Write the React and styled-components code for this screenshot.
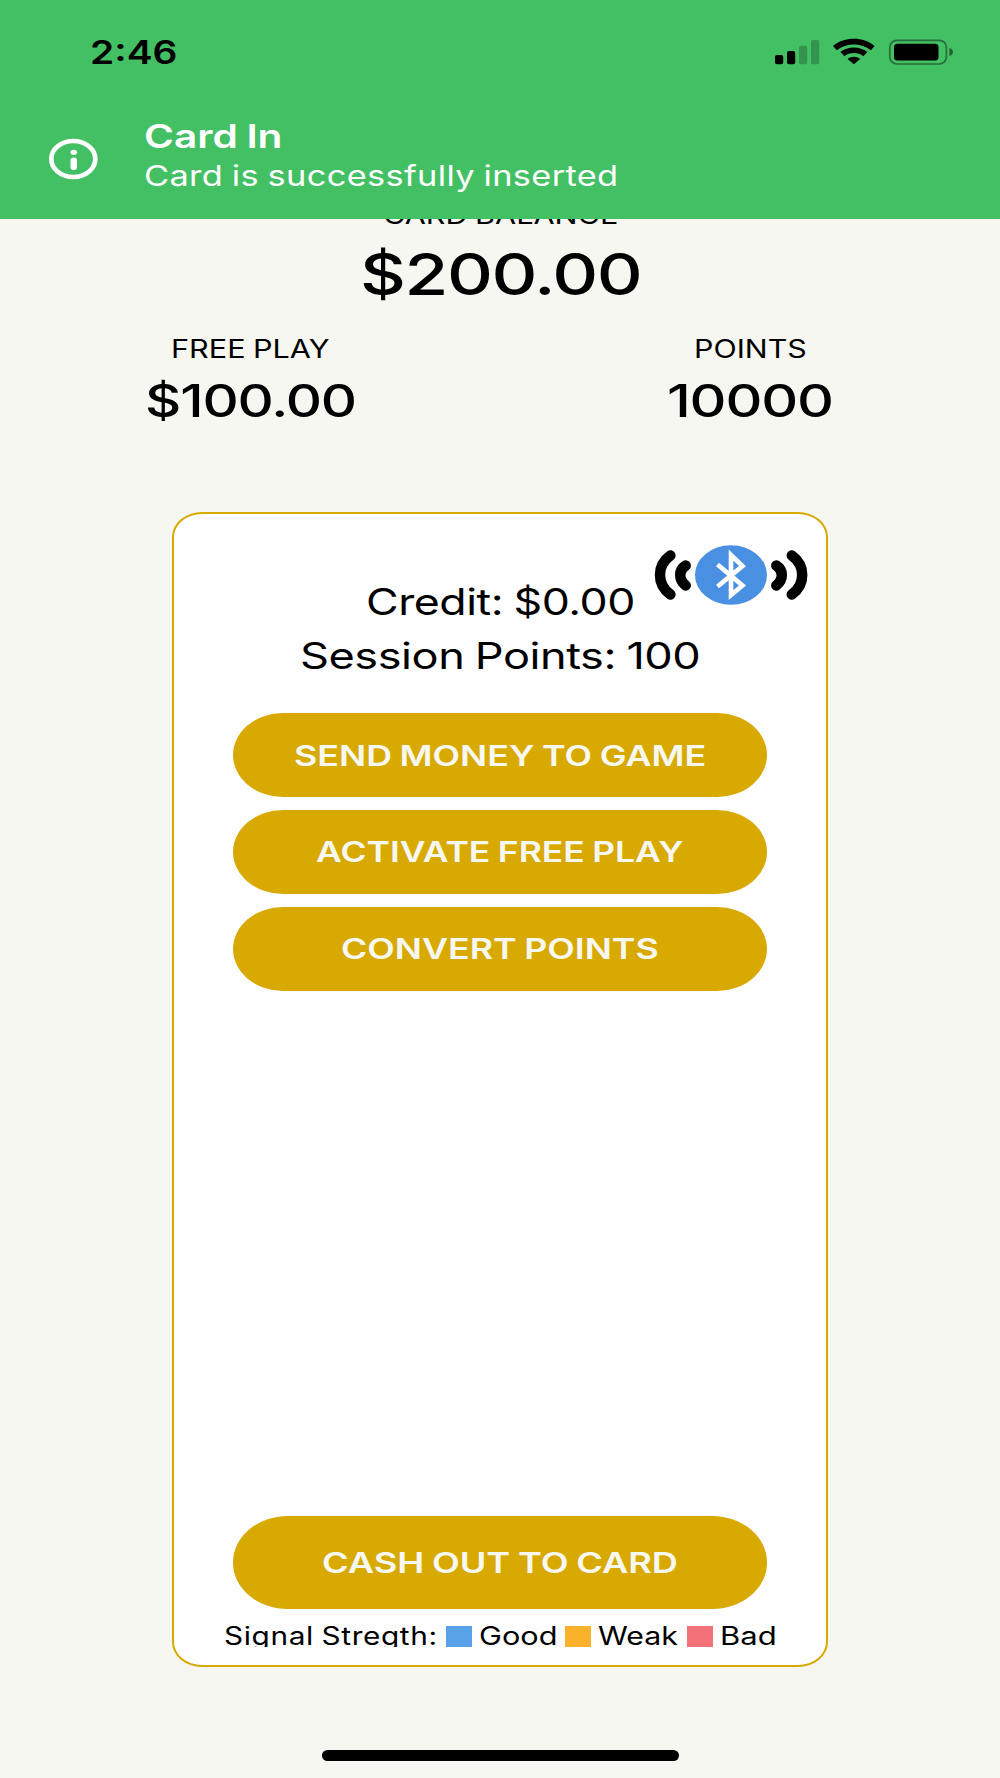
import React, { useLayoutEffect, useRef, useState } from "react";
import styled, { createGlobalStyle } from "styled-components";

const GlobalStyle = createGlobalStyle`
  *, *::before, *::after { box-sizing: border-box; }
  body { margin: 0; background: #f6f7f1; }
`;

const Screen = styled.div`
  display: flex;
  flex-direction: column;
  align-items: center;
  width: 1000px;
  height: 1778px;
  overflow: hidden;
  background: #f6f7f1;
  color: #000;
  font-family: Inter, "Liberation Sans", sans-serif;
`;

/* Wide lettering: the glyphs are stretched to span the given width */
const TextBox = styled.div`
  width: ${(p) => p.$width}px;
  height: ${(p) => p.$line}px;
  line-height: ${(p) => p.$line}px;
  font-size: ${(p) => p.$size}px;
  font-weight: ${(p) => p.$weight};
  letter-spacing: ${(p) => p.$tracking}em;
  word-spacing: -0.04em;
  white-space: nowrap;
  text-align: left;
  flex: none;
`;

const Glyphs = styled.span`
  display: inline-block;
  transform-origin: 0 50%;
`;

function WideText({ width, line, size, weight = 400, tracking = 0, children }) {
  const ref = useRef(null);
  const [scale, setScale] = useState(1.2);
  useLayoutEffect(() => {
    const fit = () => {
      if (ref.current) setScale(width / ref.current.offsetWidth);
    };
    fit();
    document.fonts.ready.then(fit);
  }, [width, children]);
  return (
    <TextBox $width={width} $line={line} $size={size} $weight={weight} $tracking={tracking}>
      <Glyphs ref={ref} style={{ transform: `scaleX(${scale})` }}>{children}</Glyphs>
    </TextBox>
  );
}

const Banner = styled.header`
  flex: none;
  width: 1000px;
  height: 219px;
  background: #43bf64;
`;

const StatusBar = styled.div`
  display: flex;
  justify-content: space-between;
  padding: 32px 46px 0 90px;
  height: 117px;
`;

const StatusIcons = styled.svg`
  width: 180px;
  height: 28px;
  margin-top: 6px;
`;

const Notice = styled.div`
  display: flex;
  color: #fff;
`;

const InfoIcon = styled.svg`
  width: 52px;
  height: 42px;
  margin: 21px 45px 0 47px;
`;

const NoticeText = styled.div`
  display: flex;
  flex-direction: column;
`;

const Balances = styled.section`
  flex: none;
  width: 1000px;
  height: 293px;
  overflow: hidden;
  display: flex;
  flex-direction: column;
  align-items: center;
`;

const MainBalance = styled.div`
  display: flex;
  flex-direction: column;
  align-items: center;
  gap: 15px;
  margin-top: -19px;
`;

const BalanceRow = styled.div`
  display: grid;
  grid-template-columns: 1fr 1fr;
  justify-items: center;
  width: 100%;
  margin-top: 30px;
`;

const Balance = styled.div`
  display: flex;
  flex-direction: column;
  align-items: center;
  gap: 14px;
`;

const Card = styled.main`
  position: relative;
  flex: none;
  display: flex;
  flex-direction: column;
  align-items: center;
  width: 656px;
  height: 1155px;
  padding-top: 61px;
  background: #fefefe;
  border: 2px solid #d8a900;
  border-radius: 30px / 25px;
`;

const BluetoothBadge = styled.svg`
  position: absolute;
  top: 28px;
  right: 14px;
  width: 160px;
  height: 68px;
`;

const Actions = styled.div`
  display: flex;
  flex-direction: column;
  gap: 12.6px;
  margin-top: 30px;
`;

const Button = styled.button`
  display: flex;
  align-items: center;
  justify-content: center;
  width: 534px;
  height: ${(p) => p.$height}px;
  padding: 1px 0 0;
  border: 0;
  border-radius: ${(p) => p.$radius};
  background: #d8a900;
  color: #f8f8f2;
  font-family: inherit;
`;

const CardFooter = styled.div`
  display: flex;
  flex-direction: column;
  align-items: center;
  margin-top: auto;
  margin-bottom: 18.5px;
  gap: 17px;
`;

const Legend = styled.div`
  display: flex;
  align-items: center;
  height: 21px;
  overflow: hidden;
`;

const Swatch = styled.span`
  flex: none;
  width: 26px;
  height: 21px;
  margin: 0 7px 0 ${(p) => p.$before}px;
  background: ${(p) => p.$color};
`;

const HomeIndicator = styled.div`
  flex: none;
  width: 357px;
  height: 11px;
  margin-top: 83px;
  border-radius: 6px;
  background: #000;
`;

const actions = [
  { label: "SEND MONEY TO GAME", width: 412 },
  { label: "ACTIVATE FREE PLAY", width: 368 },
  { label: "CONVERT POINTS", width: 317.5 },
];

const levels = [
  { label: "Good", width: 78.5, color: "#5aa2e8", before: 8.5 },
  { label: "Weak", width: 80, color: "#f9b229", before: 8 },
  { label: "Bad", width: 57, color: "#f37279", before: 8.5 },
];

export default function App() {
  return (
    <Screen>
      <GlobalStyle />
      <Banner>
        <StatusBar>
          <WideText width={87.5} line={42} size={32} weight={600}>2:46</WideText>
          <StatusIcons viewBox="774 38 180 28">
            <rect x="775" y="55" width="8.2" height="9.2" rx="2" />
            <rect x="787" y="51" width="8.2" height="13.2" rx="2" />
            <g opacity="0.22">
              <rect x="799" y="45.8" width="8.2" height="18.4" rx="2" />
              <rect x="811" y="40" width="8.2" height="24.2" rx="2" />
            </g>
            <path d="M833 45.9C844.5 36.4 863.2 36.4 874.6 45.9L870.8 50.2C861.5 42.5 846.1 42.5 836.9 50.2Z" />
            <path d="M840.4 52.1C847.5 46 860.2 46 867.4 52.1L863.4 56.3C858.3 51.9 849.5 51.9 844.5 56.3Z" />
            <path d="M847.6 59.1C851.2 55.9 856.5 55.9 860.1 59.1L853.9 64.3Z" />
            <rect x="889.8" y="40.3" width="56.6" height="23.7" rx="7" fill="none" stroke="#000" strokeOpacity="0.42" strokeWidth="1.7" />
            <rect x="894" y="43.8" width="44.5" height="16.8" rx="3.5" />
            <path d="M949.4 48V56Q953 54.5 953 52Q953 49.5 949.4 48Z" fillOpacity="0.5" />
          </StatusIcons>
        </StatusBar>
        <Notice>
          <InfoIcon viewBox="47 138 52 42">
            <ellipse cx="73.3" cy="159" rx="22" ry="18" fill="none" stroke="#fff" strokeWidth="4.7" />
            <ellipse cx="73.8" cy="152.3" rx="3.3" ry="2.6" fill="#fff" />
            <rect x="70.5" y="157.4" width="6.5" height="12.5" rx="3" fill="#fff" />
          </InfoIcon>
          <NoticeText>
            <WideText width={139} line={38} size={33} weight={600}>Card In</WideText>
            <WideText width={475} line={41} size={28.5} tracking={0.01}>Card is successfully inserted</WideText>
          </NoticeText>
        </Notice>
      </Banner>

      <Balances>
        <MainBalance>
          <WideText width={235} line={30} size={25}>CARD BALANCE</WideText>
          <WideText width={281} line={59} size={58} weight={500} tracking={-0.02}>$200.00</WideText>
        </MainBalance>
        <BalanceRow>
          <Balance>
            <WideText width={158} line={30} size={25}>FREE PLAY</WideText>
            <WideText width={211} line={46} size={44.5} weight={500} tracking={-0.02}>$100.00</WideText>
          </Balance>
          <Balance>
            <WideText width={113} line={30} size={25}>POINTS</WideText>
            <WideText width={166} line={46} size={44.5} weight={500} tracking={-0.02}>10000</WideText>
          </Balance>
        </BalanceRow>
      </Balances>

      <Card>
        <WideText width={269} line={54} size={37} tracking={-0.01}>Credit: $0.00</WideText>
        <WideText width={400} line={54} size={37} tracking={-0.01}>Session Points: 100</WideText>
        <BluetoothBadge viewBox="652 542 160 68">
          <ellipse cx="731" cy="575" rx="36" ry="29.8" fill="#4a90e2" />
          <path
            d="M717.5 564.5L742.5 585.5L731 595V555L742.5 566L717.5 586.5"
            fill="none"
            stroke="#fff"
            strokeWidth="4.6"
          />
          <g fill="none" stroke="#000" strokeWidth="10.5" strokeLinecap="round">
            <path d="M670.4 555.5Q660 563 660 575Q660 587 670.4 594.5" />
            <path d="M685.7 565.5Q680.2 569 680.2 575Q680.2 581 685.7 585.5" />
            <path d="M776.3 565.5Q781.8 569 781.8 575Q781.8 581 776.3 585.5" />
            <path d="M791.8 555.5Q802.2 563 802.2 575Q802.2 587 791.8 594.5" />
          </g>
        </BluetoothBadge>
        <Actions>
          {actions.map((a) => (
            <Button key={a.label} $height={84.2} $radius="50px / 42px">
              <WideText width={a.width} line={36} size={28.5} weight={600}>{a.label}</WideText>
            </Button>
          ))}
        </Actions>
        <CardFooter>
          <Button $height={92.5} $radius="55px / 46px">
            <WideText width={355.5} line={36} size={28.5} weight={600}>CASH OUT TO CARD</WideText>
          </Button>
          <Legend>
            <WideText width={213.5} line={22} size={25} tracking={0.02}>Signal Stregth:</WideText>
            {levels.map((l) => (
              <React.Fragment key={l.label}>
                <Swatch $color={l.color} $before={l.before} />
                <WideText width={l.width} line={22} size={25}>{l.label}</WideText>
              </React.Fragment>
            ))}
          </Legend>
        </CardFooter>
      </Card>
      <HomeIndicator />
    </Screen>
  );
}
